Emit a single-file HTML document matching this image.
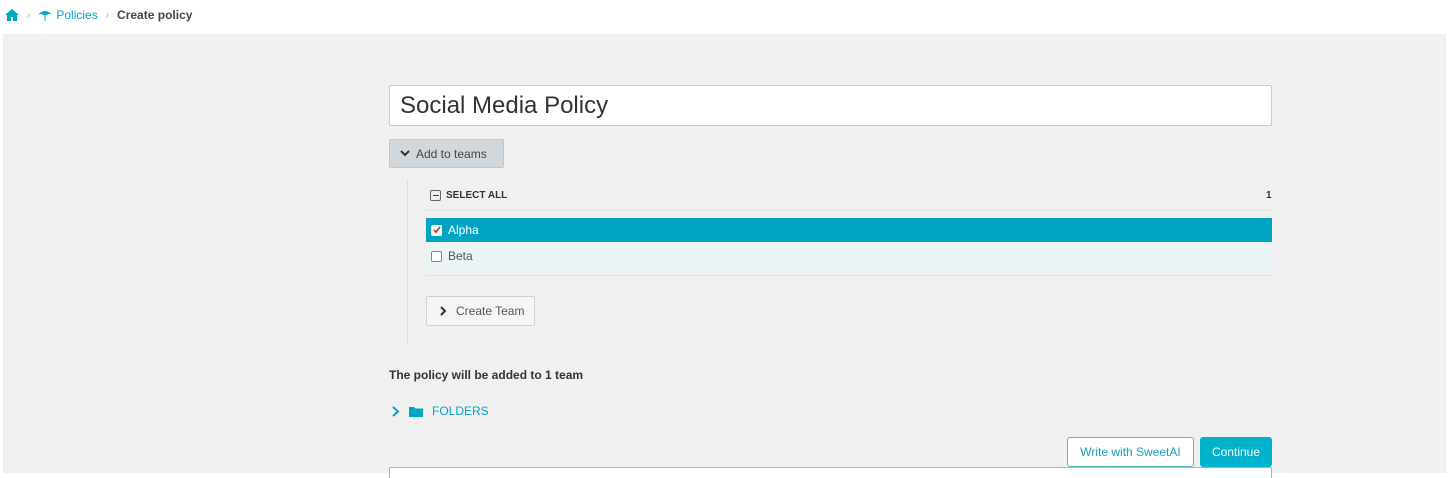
<!DOCTYPE html>
<html><head><meta charset="utf-8"><style>
*{box-sizing:border-box;margin:0;padding:0}
body{width:1450px;height:478px;background:#fff;font-family:"Liberation Sans",sans-serif;position:relative;overflow:hidden;color:#333}
.a{position:absolute}
.gray{left:3px;top:34px;width:1443px;height:439px;background:#f0f0f0}
</style></head><body>
<div class="a" style="left:5px;top:8px;font-size:12px;display:flex;align-items:center;gap:8px">
<svg width="14" height="12" viewBox="0 0 14 12"><path d="M7 0L0 6h2v6h4V8h2v4h4V6h2z" fill="#00a5c3"/></svg>
<span style="color:#aaa;font-size:10px">›</span>
<svg width="14" height="13" viewBox="0 0 14 13"><path d="M0 6Q7-2 14 6Q11 4 8.5 6L7.5 6V12H6.5V6L5.5 6Q3 4 0 6z" fill="#00a5c3"/></svg>
<span style="color:#00a5c3;margin-left:-4px">Policies</span>
<span style="color:#aaa;font-size:10px">›</span>
<span style="font-weight:bold;color:#444">Create policy</span>
</div>
<div class="a gray"></div>
<div class="a" style="left:389px;top:85px;width:883px;height:41px;background:#fff;border:1px solid #ccc;border-radius:2px;font-size:24px;padding:6px 10px;color:#333">Social Media Policy</div>
<div class="a" style="left:389px;top:139px;width:115px;height:29px;background:#d2d7dc;border:1px solid #c2c7cc;border-radius:2px;font-size:12px;color:#444;padding:7px 10px;display:flex;align-items:center;gap:6px"><svg width="10" height="7"><path d="M1 1l4 4 4-4" stroke="#333" stroke-width="2" fill="none"/></svg>Add to teams</div>
<div class="a" style="left:407px;top:180px;width:1px;height:165px;background:#ddd"></div>
<div class="a" style="left:430px;top:190px;font-size:10px;font-weight:bold;color:#333;display:flex;align-items:center;gap:5px"><span style="width:11px;height:11px;border:1px solid #666;border-radius:2px;display:inline-flex;align-items:center;justify-content:center"><span style="width:6px;height:1px;background:#444"></span></span>SELECT ALL</div>
<div class="a" style="left:1266px;top:190px;font-size:10px;font-weight:bold">1</div>
<div class="a" style="left:426px;top:210px;width:846px;height:1px;background:#e2e2e2"></div>
<div class="a" style="left:426px;top:218px;width:846px;height:24px;background:#00a5c3;color:#fff;font-size:12px;display:flex;align-items:center;padding-left:5px;gap:6px"><span style="width:11px;height:11px;background:#f4f4f4;border-radius:2px;display:inline-flex;align-items:center;justify-content:center"><svg width="8" height="8"><path d="M1 4l2 2 4-5" stroke="#c0392b" stroke-width="1.6" fill="none"/></svg></span>Alpha</div>
<div class="a" style="left:426px;top:243px;width:846px;height:26px;background:#eaf4f7;color:#555;font-size:12px;display:flex;align-items:center;padding-left:5px;gap:6px"><span style="width:11px;height:11px;background:#fff;border:1px solid #888;border-radius:2px"></span>Beta</div>
<div class="a" style="left:426px;top:275px;width:846px;height:1px;background:#e2e2e2"></div>
<div class="a" style="left:426px;top:296px;width:109px;height:30px;background:#f4f5f6;border:1px solid #cfd3d6;border-radius:2px;font-size:12px;color:#555;display:flex;align-items:center;padding-left:13px;gap:9px"><svg width="7" height="10"><path d="M1 1l4 4-4 4" stroke="#333" stroke-width="2" fill="none"/></svg>Create Team</div>
<div class="a" style="left:389px;top:368px;font-size:12px;font-weight:bold;color:#333">The policy will be added to 1 team</div>
<div class="a" style="left:392px;top:404px;font-size:12px;color:#00a5c3;display:flex;align-items:center;gap:9px"><svg width="8" height="11"><path d="M1 1l5 4.5-5 4.5" stroke="#00a5c3" stroke-width="2" fill="none"/></svg><svg width="14" height="11"><path d="M0 1h5l1.5 1.5H14V11H0z" fill="#00a5c3"/></svg>FOLDERS</div>
<div class="a" style="left:1067px;top:437px;width:127px;height:30px;background:#fff;border:1px solid #5bb8c8;border-radius:3px;color:#1aa0b8;font-size:12px;display:flex;align-items:center;justify-content:center">Write with SweetAI</div>
<div class="a" style="left:1200px;top:437px;width:72px;height:30px;background:#00b3cc;border-radius:3px;color:#fff;font-size:12px;display:flex;align-items:center;justify-content:center">Continue</div>
<div class="a" style="left:389px;top:467px;width:883px;height:11px;background:#fff;border:1px solid #7cc6d3;border-bottom:none;border-radius:2px 2px 0 0"></div>
</body></html>
